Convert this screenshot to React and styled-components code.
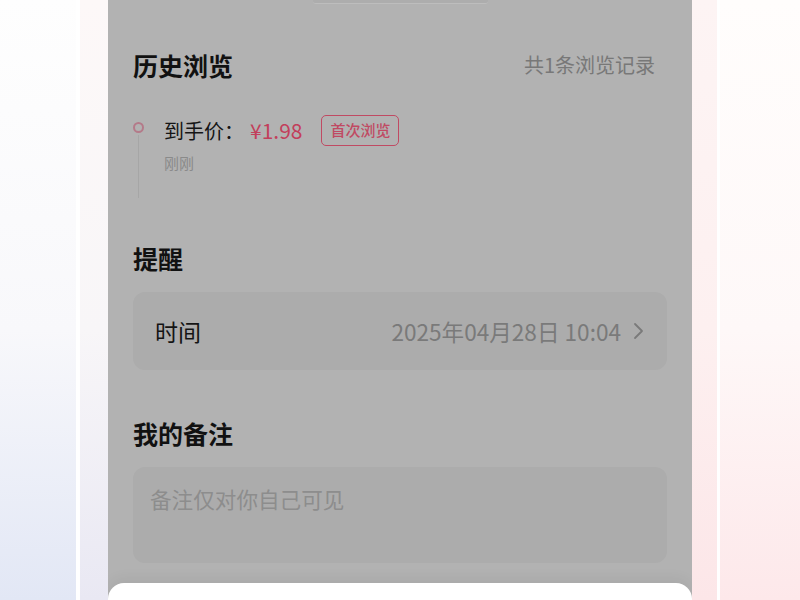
import React from "react";
import styled, { createGlobalStyle } from "styled-components";

const Global = createGlobalStyle`
  html, body { margin: 0; padding: 0; }
  body { font-family: "Noto Sans CJK SC", "Noto Sans", sans-serif; }
  #root { width: 800px; height: 600px; overflow: hidden; }
`;

const Stage = styled.div`
  display: flex;
  width: 800px;
  height: 600px;
  overflow: hidden;
`;

const Backdrop = styled.div`
  width: ${(p) => p.$w}px;
  flex-shrink: 0;
  background: linear-gradient(180deg, ${(p) => p.$top} 0%, ${(p) => p.$mid} 55%, ${(p) => p.$bottom} 100%);
`;

const Divider = styled.div`
  width: ${(p) => p.$w}px;
  flex-shrink: 0;
  background: #ffffff;
`;

const Phone = styled.div`
  position: relative;
  width: 584px;
  flex-shrink: 0;
  height: 600px;
  background: #b2b2b2;
  display: flex;
  flex-direction: column;
  padding: 0 25px;
  box-sizing: border-box;
  overflow: hidden;
`;

const TopNub = styled.div`
  align-self: center;
  width: 175px;
  height: 3px;
  border-bottom: 1px solid #bdbdbd;
  border-radius: 0 0 3px 3px;
  background: #adadad;
`;

const SectionHead = styled.div`
  display: flex;
  align-items: flex-start;
  justify-content: space-between;
  margin-top: ${(p) => p.$mt}px;
  height: 36px;
`;

const Title = styled.h2`
  margin: 0;
  font-size: 25px;
  font-weight: 700;
  color: #111111;
  line-height: 32px;
`;

const Meta = styled.span`
  font-size: 20px;
  line-height: 32px;
  color: #787878;
  margin-right: 12px;
`;

const Timeline = styled.div`
  display: flex;
  margin-top: 29px;
  height: 84px;
`;

const Rail = styled.div`
  width: 11px;
  display: flex;
  flex-direction: column;
  align-items: center;
  padding-top: 8px;
`;

const Dot = styled.div`
  width: 11px;
  height: 11px;
  box-sizing: border-box;
  border: 2px solid #b47a89;
  border-radius: 50%;
`;

const RailLine = styled.div`
  flex: 1;
  width: 1px;
  margin-top: 2px;
  background: #a6a6a6;
`;

const Entry = styled.div`
  margin-left: 20px;
  display: flex;
  flex-direction: column;
`;

const EntryTop = styled.div`
  display: flex;
  align-items: center;
  height: 32px;
`;

const Label = styled.span`
  font-size: 20px;
  color: #151515;
`;

const Price = styled.span`
  font-size: 21px;
  color: #c23f5b;
  margin-left: 6px;
`;

const Tag = styled.span`
  margin-left: 19px;
  height: 31px;
  box-sizing: border-box;
  padding: 0 8px;
  border: 1.5px solid #c04a63;
  border-radius: 5px;
  font-size: 15px;
  font-weight: 500;
  line-height: 28px;
  color: #c04a63;
`;

const When = styled.span`
  margin-top: 7px;
  font-size: 15px;
  line-height: 20px;
  color: #8a8a8a;
`;

const Card = styled.div`
  margin-top: 14px;
  height: ${(p) => p.$h}px;
  border-radius: 12px;
  background: #acacac;
  box-sizing: border-box;
`;

const RowCard = styled(Card)`
  display: flex;
  align-items: center;
  padding: 0 22px;
`;

const RowLabel = styled.span`
  font-size: 23px;
  color: #141414;
`;

const RowValue = styled.span`
  margin-left: auto;
  font-size: 22.6px;
  color: #7a7a7a;
  display: flex;
  align-items: center;
  gap: 12px;
`;

const NoteCard = styled(Card)`
  padding: 17px 17px;
`;

const Placeholder = styled.span`
  font-size: 21.6px;
  line-height: 30px;
  color: #8d8d8d;
`;

const Sheet = styled.div`
  position: absolute;
  left: 0;
  right: 0;
  top: 583px;
  bottom: 0;
  background: #ffffff;
  border-radius: 16px 16px 0 0;
  box-shadow: 0 -4px 14px rgba(0, 0, 0, 0.06);
`;

const Chevron = () => (
  <svg width="12" height="20" viewBox="0 0 12 20" fill="none">
    <polyline points="2,3 9,10 2,17" stroke="#7a7a7a" strokeWidth="1.8" strokeLinecap="round" strokeLinejoin="round" />
  </svg>
);

export default function App() {
  return (
    <>
      <Global />
      <Stage>
        <Backdrop $w={76} $top="#fefefe" $mid="#f8f8fb" $bottom="#e2e7f5" />
        <Divider $w={4} />
        <Backdrop $w={28} $top="#fdf8f8" $mid="#f8f6f8" $bottom="#e9e8f3" />
        <Phone>
          <TopNub />
          <SectionHead $mt={45}>
            <Title>历史浏览</Title>
            <Meta>共1条浏览记录</Meta>
          </SectionHead>
          <Timeline>
            <Rail>
              <Dot />
              <RailLine />
            </Rail>
            <Entry>
              <EntryTop>
                <Label>到手价：</Label>
                <Price>¥1.98</Price>
                <Tag>首次浏览</Tag>
              </EntryTop>
              <When>刚刚</When>
            </Entry>
          </Timeline>
          <SectionHead $mt={44}>
            <Title>提醒</Title>
          </SectionHead>
          <RowCard $h={78}>
            <RowLabel>时间</RowLabel>
            <RowValue>
              2025年04月28日 10:04
              <Chevron />
            </RowValue>
          </RowCard>
          <SectionHead $mt={47}>
            <Title>我的备注</Title>
          </SectionHead>
          <NoteCard $h={96}>
            <Placeholder>备注仅对你自己可见</Placeholder>
          </NoteCard>
          <Sheet />
        </Phone>
        <Backdrop $w={25} $top="#fdf4f4" $mid="#fdf0f0" $bottom="#fce6e8" />
        <Divider $w={3} />
        <Backdrop $w={80} $top="#fffdfc" $mid="#fef8f8" $bottom="#fde8ea" />
      </Stage>
    </>
  );
}
